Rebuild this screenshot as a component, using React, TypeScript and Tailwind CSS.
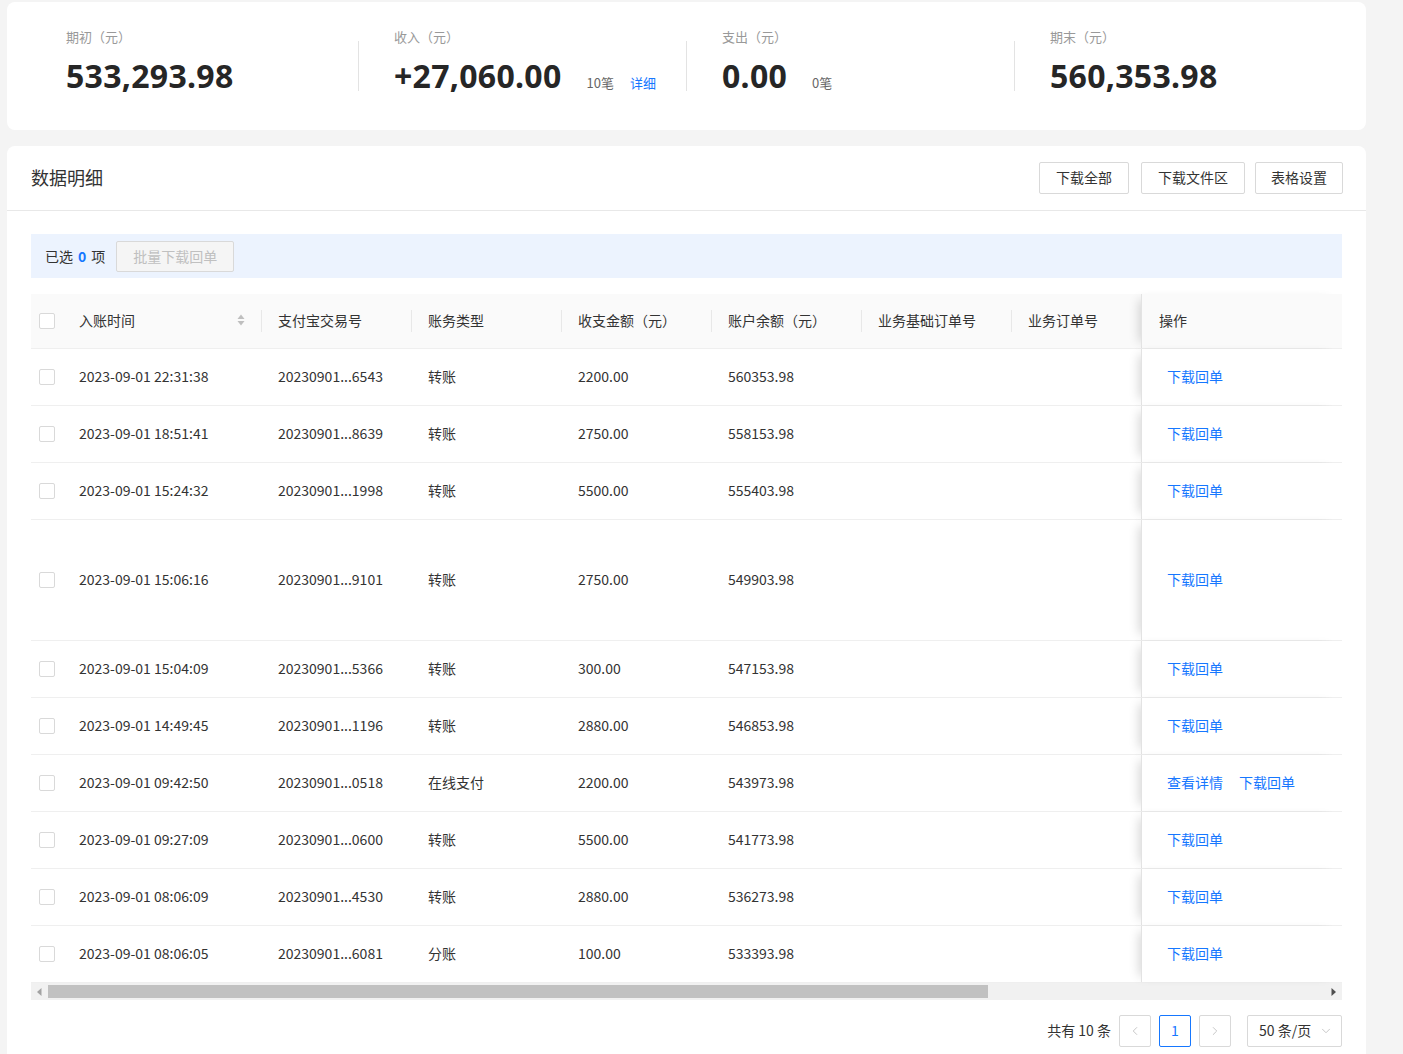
import { ChevronLeft, ChevronRight, ChevronDown } from "lucide-react";

type Row = {
  time: string;
  no: string;
  type: string;
  amount: string;
  balance: string;
  tall?: boolean;
  detail?: boolean;
};

const rows: Row[] = [
  { time: "2023-09-01 22:31:38", no: "20230901...6543", type: "转账", amount: "2200.00", balance: "560353.98" },
  { time: "2023-09-01 18:51:41", no: "20230901...8639", type: "转账", amount: "2750.00", balance: "558153.98" },
  { time: "2023-09-01 15:24:32", no: "20230901...1998", type: "转账", amount: "5500.00", balance: "555403.98" },
  { time: "2023-09-01 15:06:16", no: "20230901...9101", type: "转账", amount: "2750.00", balance: "549903.98", tall: true },
  { time: "2023-09-01 15:04:09", no: "20230901...5366", type: "转账", amount: "300.00", balance: "547153.98" },
  { time: "2023-09-01 14:49:45", no: "20230901...1196", type: "转账", amount: "2880.00", balance: "546853.98" },
  { time: "2023-09-01 09:42:50", no: "20230901...0518", type: "在线支付", amount: "2200.00", balance: "543973.98", detail: true },
  { time: "2023-09-01 09:27:09", no: "20230901...0600", type: "转账", amount: "5500.00", balance: "541773.98" },
  { time: "2023-09-01 08:06:09", no: "20230901...4530", type: "转账", amount: "2880.00", balance: "536273.98" },
  { time: "2023-09-01 08:06:05", no: "20230901...6081", type: "分账", amount: "100.00", balance: "533393.98" },
];

const grid = "grid grid-cols-[32px_199px_150px_150px_150px_150px_150px_129px_201px]";

function Checkbox() {
  return <span className="block w-4 h-4 rounded-[2px] border border-[#d9d9d9] bg-white" />;
}

function Stat({ label, value, first, extra }: { label: string; value: string; first?: boolean; extra?: React.ReactNode }) {
  return (
    <div className="flex w-[328px]">
      <div className={`w-px h-[50px] mt-[14px] ${first ? "" : "bg-[#e3e3e3]"}`} />
      <div className="pl-[35px]">
        <div className="text-[13px] leading-5 text-[#999]">{label}</div>
        <div className="flex items-baseline mt-[9px]">
          <span className="font-['Noto_Sans',sans-serif] font-bold text-[32px] leading-[40px] tracking-[0.3px] text-[#262626]">
            {value}
          </span>
          {extra}
        </div>
      </div>
    </div>
  );
}

function HeadCell({ children, sep = true, sort }: { children: React.ReactNode; sep?: boolean; sort?: boolean }) {
  return (
    <div className="relative flex items-center pl-4 pr-[17px] pb-[2px]">
      <span className="flex-1">{children}</span>
      {sort && (
        <svg width="8" height="12" viewBox="0 0 8 12">
          <path d="M4 0.5 L7.5 5 H0.5 Z" fill="#bfbfbf" />
          <path d="M4 11.5 L7.5 7 H0.5 Z" fill="#bfbfbf" />
        </svg>
      )}
      {sep && <span className="absolute right-0 top-1/2 -translate-y-1/2 w-px h-[22px] bg-[#e8e8e8]" />}
    </div>
  );
}

function Btn({ children, w }: { children: React.ReactNode; w: string }) {
  return (
    <button className={`${w} h-8 pb-px border border-[#d9d9d9] rounded-[2px] bg-white text-[14px] text-[#333]`}>
      {children}
    </button>
  );
}

const shadowCell = "border-l border-[#e3e3e3] shadow-[-8px_0_10px_-6px_rgba(0,0,0,0.16)]";

export default function App() {
  return (
    <div className="min-h-screen bg-[#f4f4f4] pt-[2px] pl-[7px] pr-[37px] font-['Noto_Sans_CJK_SC',sans-serif] text-[#333]">
      {/* summary */}
      <div className="bg-white rounded-lg pt-[25px] pb-[34px] pl-[23px] flex">
        <Stat label="期初（元）" value="533,293.98" first />
        <Stat
          label="收入（元）"
          value="+27,060.00"
          extra={
            <>
              <span className="ml-[25px] text-[13px] text-[#666]">10笔</span>
              <span className="ml-4 text-[13px] text-[#1677ff]">详细</span>
            </>
          }
        />
        <Stat label="支出（元）" value="0.00" extra={<span className="ml-[25px] text-[13px] text-[#666]">0笔</span>} />
        <Stat label="期末（元）" value="560,353.98" />
      </div>

      {/* detail */}
      <div className="bg-white rounded-t-lg mt-4 pb-6">
        <div className="h-[65px] pl-6 pr-[23px] flex items-center justify-between border-b border-[#e8e8e8]">
          <div className="text-[18px] text-[#333] pb-px">数据明细</div>
          <div className="flex">
            <Btn w="w-[90px]">下载全部</Btn>
            <span className="w-3" />
            <Btn w="w-[104px]">下载文件区</Btn>
            <span className="w-[10px]" />
            <Btn w="w-[88px]">表格设置</Btn>
          </div>
        </div>

        <div className="px-6 pt-[23px]">
          <div className="h-[44px] bg-[#ecf3fe] flex items-center pl-[14px] text-[14px]">
            <span>已选</span>
            <span className="mx-[5px] font-bold text-[#1677ff]">0</span>
            <span>项</span>
            <button className="ml-[11px] h-[31px] px-4 border border-[#d9d9d9] rounded-[2px] bg-[#f5f5f5] text-[#c0c0c0] text-[14px]">
              批量下载回单
            </button>
          </div>

          {/* table */}
          <div className="mt-[16px] text-[14px]">
            <div className={`${grid} h-[55px] bg-[#fafafa] border-b border-[#efefef]`}>
              <div className="flex items-center pl-2">
                <Checkbox />
              </div>
              <HeadCell sort>入账时间</HeadCell>
              <HeadCell>支付宝交易号</HeadCell>
              <HeadCell>账务类型</HeadCell>
              <HeadCell>收支金额（元）</HeadCell>
              <HeadCell>账户余额（元）</HeadCell>
              <HeadCell>业务基础订单号</HeadCell>
              <HeadCell sep={false}>业务订单号</HeadCell>
              <div className={`flex items-center pl-[17px] pb-[2px] bg-[#fafafa] ${shadowCell}`}>操作</div>
            </div>
            {rows.map((r) => (
              <div key={r.time} className={`${grid} ${r.tall ? "h-[121px]" : "h-[57px]"} border-b border-[#efefef]`}>
                <div className="flex items-center pl-2">
                  <Checkbox />
                </div>
                <div className="flex items-center pl-4 pb-[2px]">{r.time}</div>
                <div className="flex items-center pl-4 pb-[2px]">{r.no}</div>
                <div className="flex items-center pl-4 pb-[2px]">{r.type}</div>
                <div className="flex items-center pl-4 pb-[2px]">{r.amount}</div>
                <div className="flex items-center pl-4 pb-[2px]">{r.balance}</div>
                <div />
                <div />
                <div className={`flex items-center gap-4 pl-[25px] pb-[2px] bg-white ${shadowCell} text-[#1677ff]`}>
                  {r.detail && <span>查看详情</span>}
                  <span>下载回单</span>
                </div>
              </div>
            ))}

            {/* horizontal scrollbar */}
            <div className="h-[17px] bg-[#f1f1f1] flex items-center">
              <div className="w-[17px] flex justify-center">
                <svg width="5" height="8" viewBox="0 0 5 8">
                  <path d="M4.5 0 V8 L0 4 Z" fill="#a3a3a3" />
                </svg>
              </div>
              <div className="w-[940px] h-[13px] bg-[#c1c1c1]" />
              <div className="flex-1" />
              <div className="w-[17px] flex justify-center">
                <svg width="5" height="8" viewBox="0 0 5 8">
                  <path d="M0.5 0 V8 L5 4 Z" fill="#505050" />
                </svg>
              </div>
            </div>
          </div>

          {/* pagination */}
          <div className="mt-[15px] flex items-center justify-end text-[14px]">
            <span className="mr-2 pb-px">共有 10 条</span>
            <span className="w-8 h-8 border border-[#d9d9d9] rounded-[2px] flex items-center justify-center text-[#bfbfbf]">
              <ChevronLeft size={14} strokeWidth={1.5} />
            </span>
            <span className="ml-2 w-8 h-8 pb-px border border-[#1677ff] rounded-[2px] flex items-center justify-center text-[#1677ff]">
              1
            </span>
            <span className="ml-2 w-8 h-8 border border-[#d9d9d9] rounded-[2px] flex items-center justify-center text-[#bfbfbf]">
              <ChevronRight size={14} strokeWidth={1.5} />
            </span>
            <span className="ml-4 w-[95px] h-8 border border-[#d9d9d9] rounded-[2px] flex items-center pl-[11px] pr-2 justify-between">
              <span className="pb-px">50 条/页</span>
              <ChevronDown size={14} strokeWidth={1.5} className="text-[#bfbfbf]" />
            </span>
          </div>
        </div>
      </div>
    </div>
  );
}
